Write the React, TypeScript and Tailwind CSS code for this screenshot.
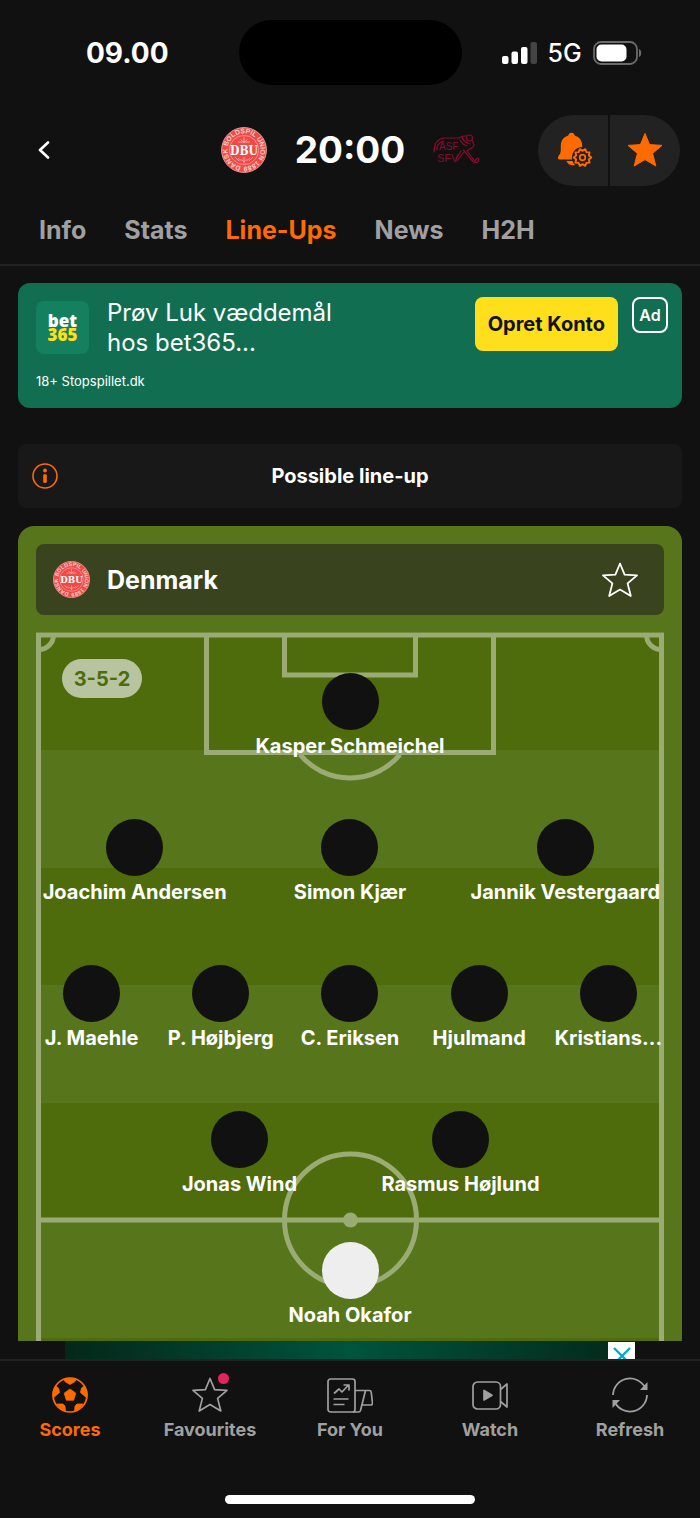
import React, { useId } from "react";

const STAR = "M18 1.5 L22.6 12.6 L35 13.4 L25.6 21.4 L28.8 34 L18 27.6 L7.2 34 L10.4 21.4 L1 13.4 L13.4 12.6 Z";

function DanishCrest({ className }: { className: string }) {
  const ring = useId();
  return (
    <svg viewBox="0 0 46 46" className={className} role="img" aria-label="Denmark crest">
      <defs>
        <path id={ring} d="M23 39.6 A16.6 16.6 0 1 1 23.1 39.6" />
      </defs>
      <circle cx="23" cy="23" r="22.4" fill="#f04a47" stroke="#e9a09a" strokeWidth="1" />
      <circle cx="23" cy="23" r="14.6" fill="none" stroke="#f6a39f" strokeWidth="0.8" />
      <text fontSize="6.8" fontWeight="700" fill="#fbd0cc" fontFamily="Liberation Sans, sans-serif">
        <textPath href={`#${ring}`} startOffset="3">DANSK BOLDSPIL UNION 1889</textPath>
      </text>
      <g fill="none" stroke="#f9b6b2" strokeWidth="0.8">
        <path d="M23 9.5v6M19.5 12.5l3.5 3 3.5-3M17 15h12M23 30v6.500M17 31c2 4 4 0 6 4 2-4 4 0 6-4M14 30l4 4M32 30l-4 4" />
      </g>
      <rect x="10.500" y="17" width="25" height="12" fill="#f04a47" />
      <text x="23" y="27.500" textAnchor="middle" fontSize="12" fontWeight="700" fill="#fff" fontFamily="DejaVu Serif Condensed, DejaVu Serif, serif">DBU</text>
    </svg>
  );
}

function SwissCrest() {
  return (
    <svg viewBox="0 0 46 32" className="h-8 w-[46px]" role="img" aria-label="Switzerland crest">
      <g fill="none" stroke="#8c0a2c" strokeWidth="1.200" strokeLinecap="round" strokeLinejoin="round">
        <path d="M1 18C1 11 4 5 11 4h14c3 0 3-2 6-2h3M4 16c-1-4 2-8 7-9" />
        <circle cx="36.500" cy="4" r="3" />
        <path d="M39 6l2 5c0 2-2 3-4 4l-3 2 7 9c2 2 2-2 3.500-2s2 3 0 4-4 0-5-1l-9-11M29 3c1 4 5 6 8 7M27 6c2 4 4 5 7 6M28 17l-5 8M31 18l-7 9" />
      </g>
      <g fill="#8c0a2c" fontFamily="Liberation Sans, sans-serif">
        <text x="6" y="16" fontSize="10">ASF</text>
        <text x="4" y="28" fontSize="11">SFV</text>
      </g>
    </svg>
  );
}

function BellGear() {
  const teeth = Array.from({ length: 20 }, (_, i) => {
    const a = (i * Math.PI) / 10;
    const r = i % 2 ? 6.6 : 8.8;
    return `${25.5 + r * Math.cos(a)},${25.5 + r * Math.sin(a)}`;
  }).join(" ");
  return (
    <svg viewBox="0 0 36 36" className="size-9" aria-hidden="true">
      <path fill="#ff6b00" d="M14.5.8c1.7 0 3 1.1 3.2 2.8 4.8 1.5 7.5 5 7.5 10.3v6c.2 2 .8 2.8 1.5 3.8V27.400H2.200C.6 27.400.5 25.200 1.700 23.800 3 22.200 3.800 20.500 3.800 18v-4c0-5.300 2.700-8.900 7.500-10.400.2-1.700 1.500-2.800 3.200-2.800Z" />
      <path fill="#ff6b00" d="M9.500 29h9v4c-4 1-8-.4-9-4Z" />
      <circle cx="25.500" cy="25.500" r="10.600" fill="#222" />
      <polygon points={teeth} fill="none" stroke="#ff6b00" strokeWidth="1.900" strokeLinejoin="round" />
      <circle cx="25.500" cy="25.500" r="2.800" fill="none" stroke="#ff6b00" strokeWidth="1.700" />
    </svg>
  );
}

function StatusBar() {
  return (
    <div className="grid h-[105px] grid-cols-[1fr_223px_1fr] items-center">
      <time className="pl-4 text-center text-[28px] font-bold leading-8">09.00</time>
      <div className="h-[65px] rounded-full bg-black" />
      <div className="flex items-center gap-[11px] pl-10">
        <svg viewBox="0 0 35 22" className="h-[22px] w-[35px]" role="img" aria-label="Signal">
          <g fill="#fff">
            <rect x="0" y="14" width="6.500" height="8" rx="2" />
            <rect x="9.500" y="9.500" width="6.500" height="12.500" rx="2" />
            <rect x="19" y="5" width="6.500" height="17" rx="2" />
            <rect x="28.500" y="0" width="6.500" height="22" rx="2" fill="#444" />
          </g>
        </svg>
        <span className="text-[25px] font-medium leading-8">5G</span>
        <svg viewBox="0 0 50 24" className="h-6 w-[50px]" role="img" aria-label="Battery">
          <rect x="1" y="1" width="43" height="22" rx="7" fill="none" stroke="#6b6b6b" strokeWidth="1.800" />
          <rect x="3.500" y="3.500" width="30" height="17" rx="5" fill="#fff" />
          <path d="M46 8c3 1 3 7 0 8Z" fill="#6b6b6b" />
        </svg>
      </div>
    </div>
  );
}

function MatchHeader() {
  return (
    <header className="grid h-[90px] grid-cols-[1fr_auto_1fr] items-center px-5">
      <button type="button" aria-label="Back" className="flex h-12 w-12 items-center justify-center">
        <svg viewBox="0 0 12 18" className="h-[18px] w-3" fill="none" stroke="#fff" strokeWidth="2.600" strokeLinecap="round" strokeLinejoin="round">
          <path d="M10 1.500 2 9l8 7.500" />
        </svg>
      </button>
      <div className="flex items-center gap-[28px]">
        <DanishCrest className="size-[46px]" />
        <h1 className="text-[37px] font-bold leading-10">20:00</h1>
        <SwissCrest />
      </div>
      <div className="grid h-[71px] w-[142px] grid-cols-2 gap-[2px] justify-self-end overflow-hidden rounded-full">
        <button type="button" aria-label="Notification settings" className="flex items-center justify-center bg-[#222] pl-1">
          <BellGear />
        </button>
        <button type="button" aria-label="Favourite match" className="flex items-center justify-center bg-[#222]">
          <svg viewBox="0 0 36 36" className="size-9" aria-hidden="true">
            <path d={STAR} fill="#ff6b00" stroke="#ff6b00" strokeWidth="1" />
          </svg>
        </button>
      </div>
    </header>
  );
}

const tabs = ["Info", "Stats", "Line-Ups", "News", "H2H"];

function Tabs() {
  return (
    <nav className="flex h-[71px] items-center gap-[38px] border-b-2 border-[#222] px-[39px] text-[25px] font-bold leading-8 text-[#a0a0a0]">
      {tabs.map((t) => (
        <a key={t} href={`#${t}`} className={t === "Line-Ups" ? "text-[#ff6b00]" : ""}>
          {t}
        </a>
      ))}
    </nav>
  );
}

function AdCard() {
  return (
    <section className="flex h-[125px] flex-col rounded-xl bg-[#126e51] px-[18px] pt-[14px]">
      <div className="flex items-start">
        <div className="mt-1 flex size-[53px] flex-col items-center justify-center rounded-lg bg-[#14805e] font-['Noto_Sans','Open_Sans',sans-serif] text-[17px] font-black leading-[14px]">
          <span>bet</span>
          <span className="text-[#ffdf1b]">365</span>
        </div>
        <p className="ml-[18px] pt-px text-2xl leading-[30px]">
          Prøv Luk væddemål
          <br />
          hos bet365...
        </p>
        <button type="button" className="ml-auto h-[54px] rounded-lg bg-[#ffdf1b] px-[13px] text-xl font-bold text-[#111]">
          Opret Konto
        </button>
        <span className="-mr-1 ml-[14px] flex size-9 items-center justify-center rounded-lg border-2 border-white text-base font-semibold">Ad</span>
      </div>
      <p className="mt-[15px] text-[13px] leading-4">18+ Stopspillet.dk</p>
    </section>
  );
}

function Notice() {
  return (
    <section className="mt-9 grid h-16 grid-cols-[26px_1fr_26px] items-center rounded-lg bg-[#181818] px-[14px]">
      <svg viewBox="0 0 26 26" className="size-[26px]" aria-hidden="true">
        <circle cx="13" cy="13" r="12" fill="none" stroke="#ff6b00" strokeWidth="1.600" />
        <circle cx="13" cy="7.500" r="1.900" fill="#ff6b00" />
        <rect x="11.200" y="11" width="3.600" height="9" rx="1.600" fill="#ff6b00" />
      </svg>
      <p className="text-center text-xl font-bold leading-6">Possible line-up</p>
    </section>
  );
}

function PitchMarkings() {
  return (
    <svg viewBox="0 0 628 709" preserveAspectRatio="xMidYMin slice" className="absolute inset-0 size-full" aria-hidden="true">
      <g fill="#4e6c0c">
        <rect width="628" height="118" />
        <rect y="236" width="628" height="117" />
        <rect y="471" width="628" height="117" />
        <rect y="706" width="628" height="4" />
      </g>
      <g fill="none" stroke="#9aab75" strokeWidth="5">
        <path d="M2.500 715V3h623v712M170.500 3v117.500h287V3M248.500 3v40h131V3M2.500 588h623" />
        <path d="M17.500 3A14.500 14.500 0 0 1 3 17.500M610.500 3A14.500 14.500 0 0 0 625 17.500M264 122.500A65 65 0 0 0 364 122.500" />
        <circle cx="314.500" cy="588" r="66" />
      </g>
      <circle cx="314.500" cy="588" r="7.500" fill="#9aab75" />
    </svg>
  );
}

function Player({ name, away = false }: { name: string; away?: boolean }) {
  return (
    <li className="flex flex-col items-center gap-[3px]">
      <span className={`size-[57px] rounded-full ${away ? "bg-[#eee]" : "bg-[#111]"}`} />
      <span className="whitespace-nowrap text-xl font-bold leading-[26px]">{name}</span>
    </li>
  );
}

function Lineup() {
  return (
    <section className="mt-[18px] rounded-t-2xl bg-[#57761b] px-[18px] pt-[18px]">
      <div className="flex h-[71px] items-center rounded-lg bg-[#39441f] pl-[17px] pr-[26px]">
        <DanishCrest className="size-[37px]" />
        <h2 className="ml-[17px] text-[25px] font-bold leading-8">Denmark</h2>
        <button type="button" aria-label="Favourite Denmark" className="ml-auto">
          <svg viewBox="0 0 36 36" className="size-9" fill="none" stroke="#fff" strokeWidth="1.800" strokeLinejoin="round">
            <path d={STAR} />
          </svg>
        </button>
      </div>
      <div className="relative mt-[17px] pt-[41px]">
        <PitchMarkings />
        <span className="absolute left-[26px] top-[27px] flex h-[39px] w-20 items-center justify-center rounded-full bg-[#b8c49f] text-xl font-bold text-[#4e6c0c]">
          3-5-2
        </span>
        <div className="relative -mx-[9px] flex flex-col gap-[60px]">
          <ul className="grid grid-cols-1"><Player name="Kasper Schmeichel" /></ul>
          <ul className="grid grid-cols-3">
            <Player name="Joachim Andersen" />
            <Player name="Simon Kjær" />
            <Player name="Jannik Vestergaard" />
          </ul>
          <ul className="grid grid-cols-5">
            <Player name="J. Maehle" />
            <Player name="P. Højbjerg" />
            <Player name="C. Eriksen" />
            <Player name="Hjulmand" />
            <Player name="Kristians..." />
          </ul>
          <ul className="grid grid-cols-2 px-[102px]">
            <Player name="Jonas Wind" />
            <Player name="Rasmus Højlund" />
          </ul>
        </div>
        <ul className="relative mt-[45px] pb-[13px]"><Player name="Noah Okafor" away /></ul>
      </div>
    </section>
  );
}

function BannerEdge() {
  return (
    <div className="mx-auto flex h-[18px] w-full max-w-[570px] justify-end overflow-hidden bg-linear-to-r from-[#03281a] via-[#00543c] to-[#03281a]">
      <button type="button" aria-label="Close ad" className="mt-[1px] flex h-7 w-[27px] justify-center bg-white pt-[5px]">
        <svg viewBox="0 0 18 18" className="size-[18px]" fill="none" stroke="#00aecd" strokeWidth="2.400">
          <path d="M1 1l16 16M17 1 1 17" />
        </svg>
      </button>
    </div>
  );
}

const line = { fill: "none", stroke: "#a0a0a0", strokeWidth: 1.7, strokeLinejoin: "round" as const };

const BallIcon = () => (
  <svg viewBox="0 0 36 36" className="size-9" aria-hidden="true">
    <circle cx="18" cy="18" r="17" fill="none" stroke="#ff6b00" strokeWidth="1.700" />
    <g fill="#ff6b00" stroke="#ff6b00" strokeWidth="0.800" strokeLinejoin="round">
      <path d="M18 12l5.800 4.200-2.200 7h-7.200l-2.200-7Z" />
      <path d="M12 2.500Q18 0 24 2.500L23 4.500 18 7.500 13 4.500Z" />
      <path d="M3.500 9 6.500 11 7.500 15.500 1.200 21Q0 14 3.500 9Z" />
      <path d="M32.500 9 29.500 11 28.500 15.500 34.800 21Q36 14 32.500 9Z" />
      <path d="M5 27h6l2 2 .5 5.500Q8.500 33 5 27Z" />
      <path d="M31 27h-6l-2 2-.5 5.500Q27.500 33 31 27Z" />
    </g>
  </svg>
);

const FavIcon = () => (
  <span className="relative">
    <svg viewBox="0 0 36 36" className="size-9" {...line} aria-hidden="true"><path d={STAR} /></svg>
    <span className="absolute -right-[1px] -top-1 size-[11px] rounded-full bg-[#e0245e]" />
  </span>
);

const ForYouIcon = () => (
  <svg viewBox="0 0 46 36" className="h-9 w-[46px]" {...line} aria-hidden="true">
    <rect x="1" y="2" width="27" height="33" rx="2.500" />
    <path d="M7 16.500l5-4.500 3 3 6.500-7M16.500 8H22v5.500M6.500 22h15M6.500 27.500h11M28 13.500h14.500q1.500 0 1.700 1.500l1.300 11q0 2-1.500 2h-8.500M38.500 13.500l-5 20q-.5 1.500-2 1.500H26" />
  </svg>
);

const WatchIcon = () => (
  <svg viewBox="0 0 36 36" className="size-9" {...line} aria-hidden="true">
    <rect x="1" y="5" width="27.500" height="27" rx="4.500" />
    <path d="M28.500 12.500 35 7v23l-6.500-5.500" />
    <path d="M12 13.500v9.500l8-4.700Z" fill="#a0a0a0" />
  </svg>
);

const RefreshIcon = () => (
  <svg viewBox="0 0 36 36" className="size-9" fill="none" stroke="#a0a0a0" strokeWidth="1.800" aria-hidden="true">
    <path d="M1 18A17 17 0 0 1 33 10.500M35 18A17 17 0 0 1 3 25.500" />
    <path d="M35.500 5v8H28ZM.5 31v-8H8Z" fill="#a0a0a0" stroke="none" />
  </svg>
);

const items = [
  { label: "Scores", Icon: BallIcon },
  { label: "Favourites", Icon: FavIcon },
  { label: "For You", Icon: ForYouIcon },
  { label: "Watch", Icon: WatchIcon },
  { label: "Refresh", Icon: RefreshIcon },
];

function BottomNav() {
  return (
    <footer className="border-t-2 border-[#222] pt-4">
      <nav className="grid grid-cols-5">
        {items.map(({ label, Icon }) => (
          <a
            key={label}
            href={`#${label}`}
            className={`flex flex-col items-center gap-[5px] text-lg font-bold leading-6 ${label === "Scores" ? "text-[#ff6b00]" : "text-[#a0a0a0]"}`}
          >
            <span className="flex h-9 items-center"><Icon /></span>
            {label}
          </a>
        ))}
      </nav>
      <div className="mx-auto mb-[15px] mt-[53px] h-[9px] w-[250px] rounded-full bg-white" />
    </footer>
  );
}

export default function App() {
  return (
    <div className="flex min-h-screen flex-col overflow-x-hidden bg-[#111] font-['Inter','Liberation_Sans',sans-serif] text-white">
      <StatusBar />
      <MatchHeader />
      <Tabs />
      <main className="px-[18px] pt-[17px]">
        <AdCard />
        <Notice />
        <Lineup />
      </main>
      <BannerEdge />
      <BottomNav />
    </div>
  );
}
